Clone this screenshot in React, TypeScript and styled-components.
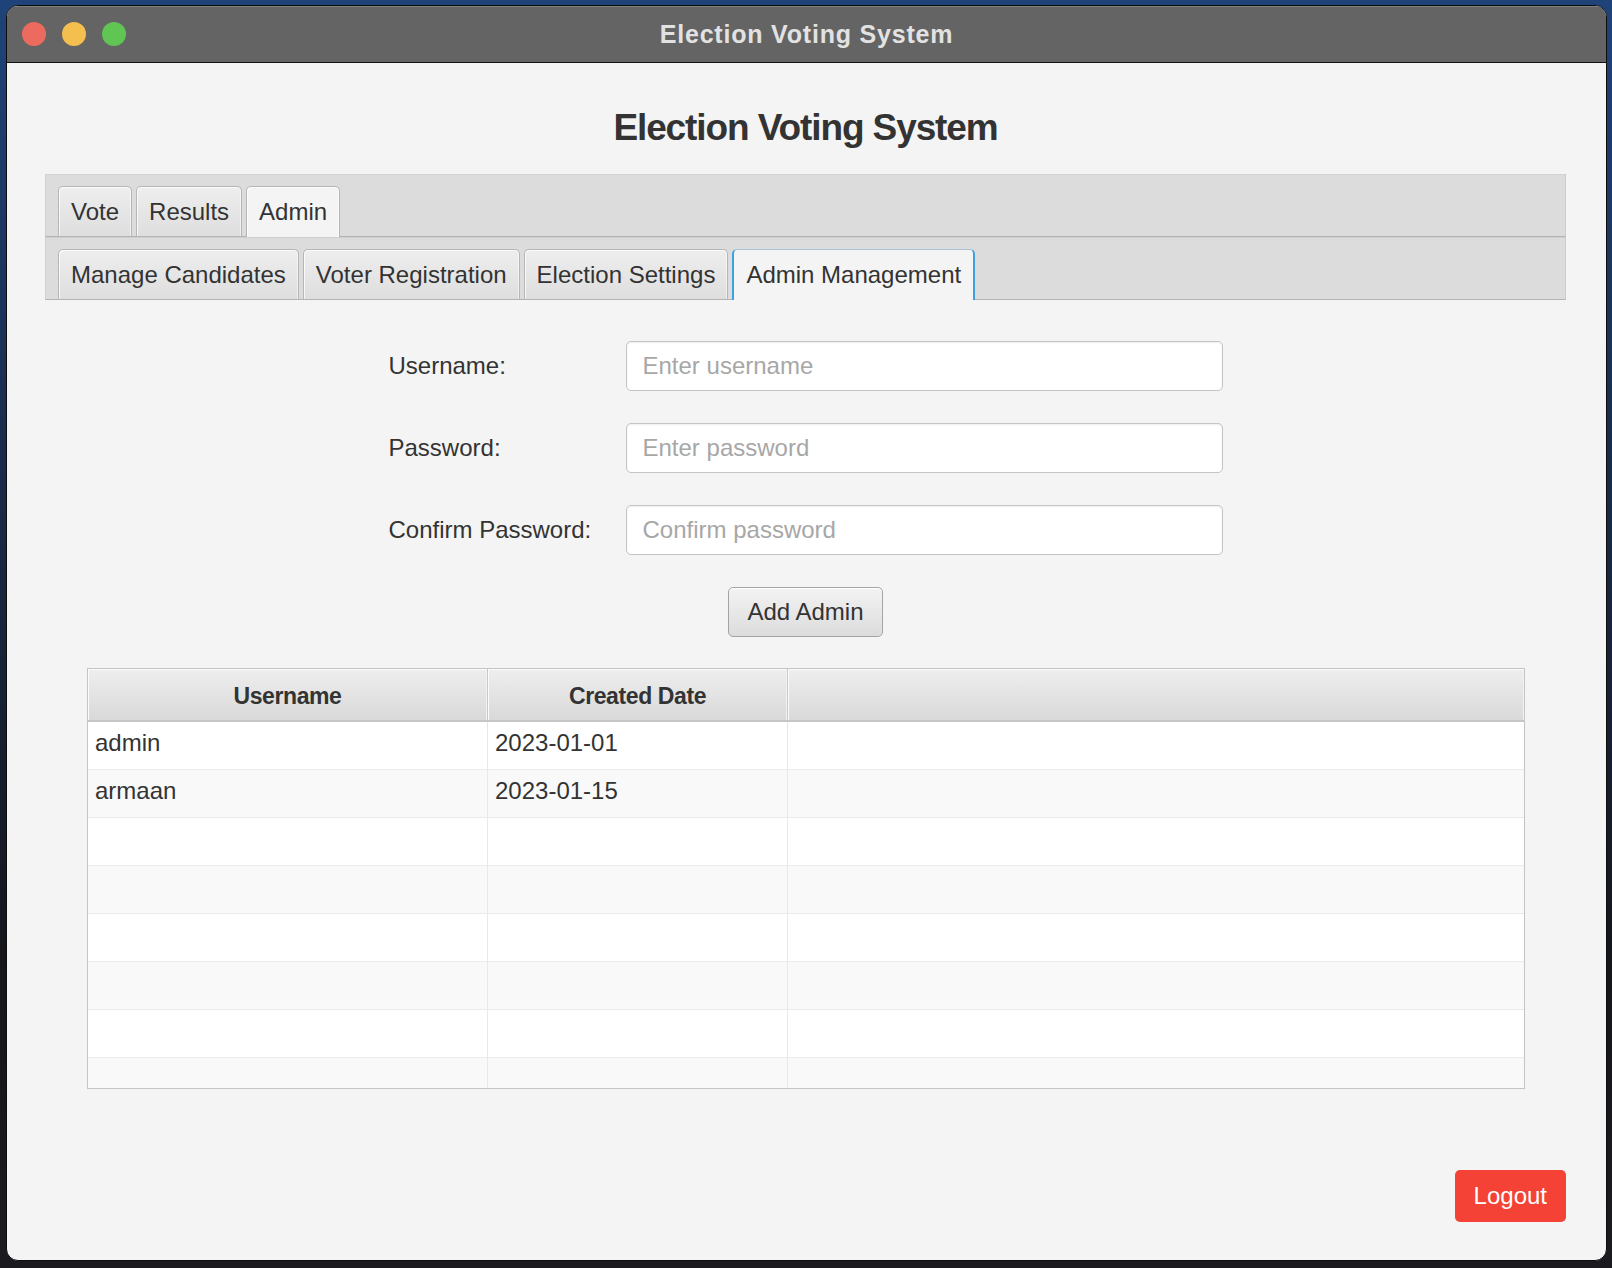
import React from "react";
import styled, { createGlobalStyle, css } from "styled-components";

const GlobalStyle = createGlobalStyle`
  * { box-sizing: border-box; }
  html, body { margin: 0; padding: 0; }
  body {
    width: 1612px;
    height: 1268px;
    overflow: hidden;
    background: linear-gradient(180deg, #1f4378 0%, #1a2c4c 35%, #14161c 75%, #1b1a1f 100%);
    font-family: "Liberation Sans", Arial, sans-serif;
    color: #333;
  }
`;

const Window = styled.div`
  margin: 5px 0 0 6px;
  width: 1601px;
  height: 1256px;
  border: 1px solid #0d0d0d;
  border-radius: 12px;
  overflow: hidden;
  display: flex;
  flex-direction: column;
  background: #f4f4f4;
`;

const TitleBar = styled.div`
  height: 57px;
  flex: none;
  display: grid;
  grid-template-columns: 1fr auto 1fr;
  align-items: center;
  padding: 0 15px;
  background: #646464;
  border-bottom: 1px solid #111;
  box-shadow: inset 0 1px 0 rgba(255, 255, 255, 0.18);
`;

const Lights = styled.div`
  display: flex;
  gap: 16px;
`;

const Light = styled.span<{ $color: string }>`
  width: 24px;
  height: 24px;
  border-radius: 50%;
  background: ${(p) => p.$color};
`;

const WindowTitle = styled.div`
  font-size: 25px;
  font-weight: 700;
  letter-spacing: 0.8px;
  color: #e2e2e2;
`;

const Content = styled.div`
  flex: 1;
  display: flex;
  flex-direction: column;
  padding: 41px 40px 38px 38px;
`;

const Heading = styled.h1`
  margin: 0 0 22px;
  text-align: center;
  font-size: 37px;
  line-height: 48px;
  font-weight: 700;
  letter-spacing: -1.1px;
  color: #333;
`;

const TabRow = styled.div<{ $second?: boolean }>`
  height: 63px;
  display: flex;
  align-items: flex-end;
  gap: 4px;
  padding: 0 12px;
  background: #dcdcdc;
  border-left: 1px solid #d0d0d0;
  border-right: 1px solid #cbcbcb;
  border-bottom: 1px solid #b3b3b3;
  ${(p) =>
    p.$second
      ? css`box-shadow: inset 0 1px 0 #cfcfcf;`
      : css`box-shadow: inset 0 1px 0 #d2d2d2;`}
`;

const Tab = styled.div<{ $active?: boolean; $focused?: boolean }>`
  height: ${(p) => (p.$active ? "51px" : "50px")};
  margin-bottom: ${(p) => (p.$active ? "-1px" : "0")};
  display: flex;
  align-items: center;
  padding: 0 12px;
  font-size: 24px;
  color: #333;
  border: 1px solid #b6b6b6;
  border-bottom: none;
  border-radius: 5px 5px 0 0;
  background: ${(p) =>
    p.$active ? "#f4f4f4" : "linear-gradient(180deg, #eeeeee 0%, #dedede 100%)"};
  box-shadow: inset 1px 1px 0 rgba(255, 255, 255, 0.75),
    inset -1px 0 0 rgba(255, 255, 255, 0.5);
  ${(p) =>
    p.$focused &&
    css`
      border-left: 2px solid #3ea0de;
      border-right: 2px solid #3ea0de;
      border-top-color: #a9c3d6;
      box-shadow: none;
    `}
`;

const FormGrid = styled.div`
  margin-top: 41px;
  display: grid;
  grid-template-columns: 237px 597px;
  row-gap: 32px;
  align-items: center;
  justify-content: center;
`;

const Label = styled.label`
  font-size: 24px;
  color: #333;
`;

const Input = styled.input`
  height: 50px;
  width: 100%;
  padding: 0 16px;
  border: 1px solid #c4c4c4;
  border-radius: 5px;
  background: #fff;
  box-shadow: inset 0 1px 2px rgba(0, 0, 0, 0.07);
  font-family: "Liberation Sans", Arial, sans-serif;
  font-size: 24px;
  color: #333;
  outline: none;
  &::placeholder {
    color: #a7a7a7;
  }
`;

const ButtonRow = styled.div`
  margin-top: 32px;
  display: flex;
  justify-content: center;
`;

const AddButton = styled.button`
  height: 50px;
  padding: 0 18px;
  border: 1px solid #a4a4a4;
  border-radius: 5px;
  background: linear-gradient(180deg, #f3f3f3 0%, #dcdcdc 100%);
  box-shadow: inset 0 1px 0 #fff;
  font-family: "Liberation Sans", Arial, sans-serif;
  font-size: 24px;
  color: #333;
`;

const Table = styled.div`
  margin: 31px 41px 0 42px;
  border: 1px solid #c4c4c4;
  background: #fff;
`;

const HeaderRow = styled.div`
  height: 53px;
  display: grid;
  grid-template-columns: 400px 300px 1fr;
  border-bottom: 2px solid #c6c6c6;
`;

const HeaderCell = styled.div<{ $last?: boolean }>`
  display: flex;
  align-items: center;
  justify-content: center;
  padding-top: 3px;
  background: linear-gradient(180deg, #eeeeee 0%, #d9d9d9 100%);
  border-right: ${(p) => (p.$last ? "none" : "1px solid #c8c8c8")};
  box-shadow: inset 1px 1px 0 #fbfbfb, inset -1px 0 0 #f2f2f2;
  font-size: 23px;
  font-weight: 700;
  letter-spacing: -0.4px;
  color: #333;
`;

const Body = styled.div`
  height: 366px;
  overflow: hidden;
`;

const Row = styled.div<{ $alt?: boolean }>`
  height: 48px;
  display: grid;
  grid-template-columns: 400px 300px 1fr;
  border-bottom: 1px solid #ebebeb;
  background: ${(p) => (p.$alt ? "#f9f9f9" : "#ffffff")};
`;

const Cell = styled.div<{ $last?: boolean }>`
  display: flex;
  align-items: center;
  padding: 0 7px 5px;
  border-right: ${(p) => (p.$last ? "none" : "1px solid #e8e8e8")};
  font-size: 24px;
  color: #333;
`;

const Footer = styled.div`
  margin-top: auto;
  display: flex;
  justify-content: flex-end;
`;

const LogoutButton = styled.button`
  height: 52px;
  padding: 0 19px;
  border: none;
  border-radius: 5px;
  background: #f44336;
  color: #fff;
  font-family: "Liberation Sans", Arial, sans-serif;
  font-size: 24px;
`;

const admins = [
  { username: "admin", created: "2023-01-01" },
  { username: "armaan", created: "2023-01-15" },
];

export default function App() {
  const rows = [...admins, ...Array.from({ length: 6 }, () => null)];
  return (
    <>
      <GlobalStyle />
      <Window>
        <TitleBar>
          <Lights>
            <Light $color="#ed6a5e" />
            <Light $color="#f5bf4f" />
            <Light $color="#61c554" />
          </Lights>
          <WindowTitle>Election Voting System</WindowTitle>
          <div />
        </TitleBar>
        <Content>
          <Heading>Election Voting System</Heading>
          <TabRow>
            <Tab>Vote</Tab>
            <Tab>Results</Tab>
            <Tab $active>Admin</Tab>
          </TabRow>
          <TabRow $second>
            <Tab>Manage Candidates</Tab>
            <Tab>Voter Registration</Tab>
            <Tab>Election Settings</Tab>
            <Tab $active $focused>
              Admin Management
            </Tab>
          </TabRow>

          <FormGrid>
            <Label>Username:</Label>
            <Input placeholder="Enter username" />
            <Label>Password:</Label>
            <Input type="password" placeholder="Enter password" />
            <Label>Confirm Password:</Label>
            <Input type="password" placeholder="Confirm password" />
          </FormGrid>
          <ButtonRow>
            <AddButton>Add Admin</AddButton>
          </ButtonRow>

          <Table>
            <HeaderRow>
              <HeaderCell>Username</HeaderCell>
              <HeaderCell>Created Date</HeaderCell>
              <HeaderCell $last />
            </HeaderRow>
            <Body>
              {rows.map((r, i) => (
                <Row key={i} $alt={i % 2 === 1}>
                  <Cell>{r ? r.username : ""}</Cell>
                  <Cell>{r ? r.created : ""}</Cell>
                  <Cell $last />
                </Row>
              ))}
            </Body>
          </Table>

          <Footer>
            <LogoutButton>Logout</LogoutButton>
          </Footer>
        </Content>
      </Window>
    </>
  );
}
